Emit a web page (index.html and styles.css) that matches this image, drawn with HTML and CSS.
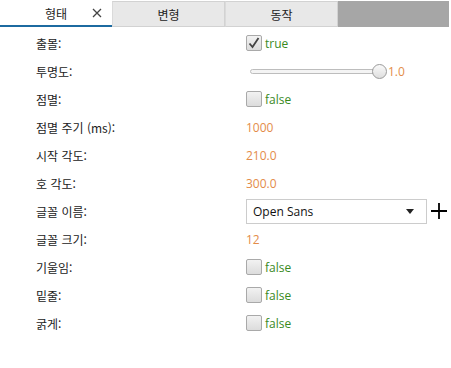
FILE: index.html
```html
<!DOCTYPE html>
<html lang="ko">
<head>
    <meta charset="UTF-8">
    <title>속성</title>
    <link rel="stylesheet" href="styles.css">
</head>
<body>
    <div class="tabs">
        <div class="tab active"><span class="tab-title">형태</span><svg class="tab-close" width="10" height="10" viewBox="0 0 10 10"><path d="M1 1 L9 9 M9 1 L1 9" stroke="#444" stroke-width="1.3"/></svg></div>
        <div class="tab">변형</div>
        <div class="tab">동작</div>
        <div class="tab-fill"></div>
    </div>

    <div class="props">
        <div class="row">
            <div class="label">출몰:</div>
            <div class="value"><span class="check checked"><svg width="14" height="14" viewBox="0 0 14 14"><path d="M2.5 7.5 L5.5 11 L11.5 2" fill="none" stroke="#444" stroke-width="1.8"/></svg></span><span class="bool">true</span></div>
        </div>
        <div class="row">
            <div class="label">투명도:</div>
            <div class="value"><div class="slider"><div class="track"></div><div class="thumb"></div></div><span class="num slider-num">1.0</span></div>
        </div>
        <div class="row">
            <div class="label">점멸:</div>
            <div class="value"><span class="check"></span><span class="bool">false</span></div>
        </div>
        <div class="row">
            <div class="label">점멸 주기 (ms):</div>
            <div class="value"><span class="num">1000</span></div>
        </div>
        <div class="row">
            <div class="label">시작 각도:</div>
            <div class="value"><span class="num">210.0</span></div>
        </div>
        <div class="row">
            <div class="label">호 각도:</div>
            <div class="value"><span class="num">300.0</span></div>
        </div>
        <div class="row">
            <div class="label">글꼴 이름:</div>
            <div class="value">
                <div class="combo"><span>Open Sans</span><span class="arrow"></span></div>
                <svg class="plus" width="18" height="18" viewBox="0 0 18 18"><path d="M9 1 V17 M1 9 H17" stroke="#000" stroke-width="1.8"/></svg>
            </div>
        </div>
        <div class="row">
            <div class="label">글꼴 크기:</div>
            <div class="value"><span class="num">12</span></div>
        </div>
        <div class="row">
            <div class="label">기울임:</div>
            <div class="value"><span class="check"></span><span class="bool">false</span></div>
        </div>
        <div class="row">
            <div class="label">밑줄:</div>
            <div class="value"><span class="check"></span><span class="bool">false</span></div>
        </div>
        <div class="row">
            <div class="label">굵게:</div>
            <div class="value"><span class="check"></span><span class="bool">false</span></div>
        </div>
    </div>
</body>
</html>
```

FILE: styles.css
```css
body {
    margin: 0;
    background-color: #ffffff;
    font-family: "Open Sans", "Noto Sans CJK KR", sans-serif;
    font-size: 12px;
    color: #222;
}
.tabs {
    display: flex;
    height: 26px;
    margin-top: 1px;
    width: 449px;
}
.tab {
    width: 113px;
    display: flex;
    align-items: center;
    justify-content: center;
    background-color: #e8e8e8;
    border: 1px solid #d2d2d2;
    border-left: 1px solid #dadada;
    box-sizing: border-box;
    font-family: "Noto Sans CJK KR", sans-serif;
    color: #222;
}
.tab.active {
    width: 112px;
    background-color: #ffffff;
    border: none;
    border-bottom: 2px solid #1c6aa0;
    position: relative;
}
.tab-close {
    position: absolute;
    left: 92px;
    top: 7px;
}
.tab-fill {
    flex: 1;
    background-color: #a6a6a6;
}
.props {
    padding-top: 2px;
}
.row {
    display: flex;
    align-items: center;
    height: 28px;
}
.label {
    width: 210px;
    padding-left: 36px;
    font-family: "Noto Sans CJK KR", sans-serif;
    font-size: 12px;
    color: #222;
}
.value {
    display: flex;
    align-items: center;
}
.check {
    width: 14px;
    height: 14px;
    border: 1px solid #a9a9a9;
    border-radius: 2px;
    background: linear-gradient(#f2f2f2, #dcdcdc);
    display: inline-flex;
    align-items: center;
    justify-content: center;
    margin-right: 3px;
}
.bool {
    color: #3a8a1e;
}
.num {
    color: #e38c4a;
}
.slider {
    position: relative;
    width: 136px;
    height: 16px;
    margin-left: 4px;
}
.track {
    position: absolute;
    left: 0;
    right: 6px;
    top: 6px;
    height: 3px;
    border: 1px solid #bdbdbd;
    border-radius: 3px;
    background-color: #f4f4f4;
}
.thumb {
    position: absolute;
    left: 122px;
    top: 1px;
    width: 13px;
    height: 13px;
    border: 1px solid #9a9a9a;
    border-radius: 50%;
    background: linear-gradient(#fafafa, #dedede);
}
.slider-num {
    margin-left: 2px;
}
.combo {
    width: 181px;
    height: 25px;
    box-sizing: border-box;
    border: 1px solid #cccccc;
    display: flex;
    align-items: center;
    justify-content: space-between;
    padding: 0 12px 0 6px;
    color: #111;
}
.arrow {
    width: 0;
    height: 0;
    border-left: 4px solid transparent;
    border-right: 4px solid transparent;
    border-top: 5px solid #222;
}
.plus {
    margin-left: 3px;
}
```
